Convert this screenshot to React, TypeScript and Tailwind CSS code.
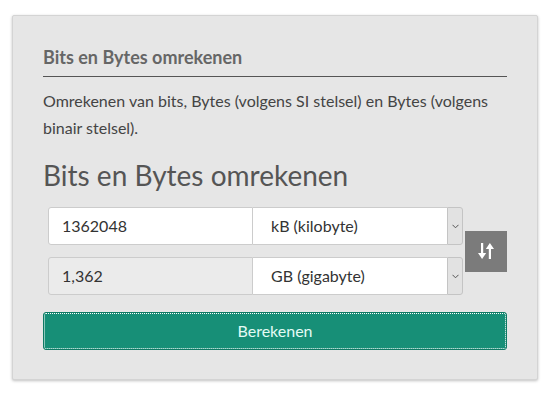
export default function App() {
  return (
    <div className="min-h-[398px] w-[560px] bg-white pt-[15px] pl-[12px] font-['Lato',sans-serif]">
      <div className="flex h-[365px] w-[526px] flex-col rounded-[2px] border border-[#d4d4d4] bg-[#e6e6e6] px-[30px] pt-[29px] shadow-[0_1px_3px_rgba(0,0,0,0.25)]">
        {/* Titel */}
        <h3 className="border-b border-[#555] pb-[7px] text-[18px] font-bold leading-[24px] text-[#666]">
          Bits en Bytes omrekenen
        </h3>
        <p className="mt-[10px] text-[16px] leading-[27px] text-[#444]">
          Omrekenen van bits, Bytes (volgens SI stelsel) en Bytes (volgens binair stelsel).
        </p>
        <h2 className="mt-[17px] text-[28px] leading-[34px] text-[#555]">Bits en Bytes omrekenen</h2>

        {/* Invoer */}
        <div className="mt-[15px] flex items-center gap-[2px] pl-[5px]">
          <div className="flex w-[416px] flex-col gap-[12px]">
            <InputRow value="1362048" unit="kB (kilobyte)" />
            <InputRow value="1,362" unit="GB (gigabyte)" readOnly />
          </div>
          <button className="flex h-[41px] w-[42px] items-center justify-center bg-[#7b7b7b]">
            <svg width="16" height="16" viewBox="0 0 16 16" fill="#fff">
              <rect x="3" y="0" width="2.2" height="11" />
              <polygon points="0,10 8.2,10 4.1,16" />
              <rect x="10.8" y="5" width="2.2" height="11" />
              <polygon points="7.8,6 16,6 11.9,0" />
            </svg>
          </button>
        </div>

        <button className="mt-[17px] h-[38px] w-full rounded-[3px] border border-[#0f7a64] bg-[#178f77] text-[16px] text-[#e4fbf5] outline-1 outline-dotted outline-white -outline-offset-2">
          Berekenen
        </button>
      </div>
    </div>
  );
}

function InputRow({ value, unit, readOnly }: { value: string; unit: string; readOnly?: boolean }) {
  return (
    <div className="flex h-[38px] text-[16px] text-[#333]">
      <div
        className={`flex w-[205px] items-center rounded-l-[3px] border border-[#ccc] pl-[13px] ${
          readOnly ? "bg-[#ebebeb]" : "bg-white"
        }`}
      >
        {value}
      </div>
      <div className="flex flex-1 items-center border-y border-[#ccc] bg-white pl-[18px]">{unit}</div>
      <div className="flex w-[16px] items-center justify-center rounded-r-[3px] border border-[#c4c4c4] bg-[#e2e2e2]">
        <svg width="7" height="5" viewBox="0 0 7 5" fill="none" stroke="#555" strokeWidth="1">
          <path d="M0.5 0.8 L3.5 3.8 L6.5 0.8" />
        </svg>
      </div>
    </div>
  );
}
